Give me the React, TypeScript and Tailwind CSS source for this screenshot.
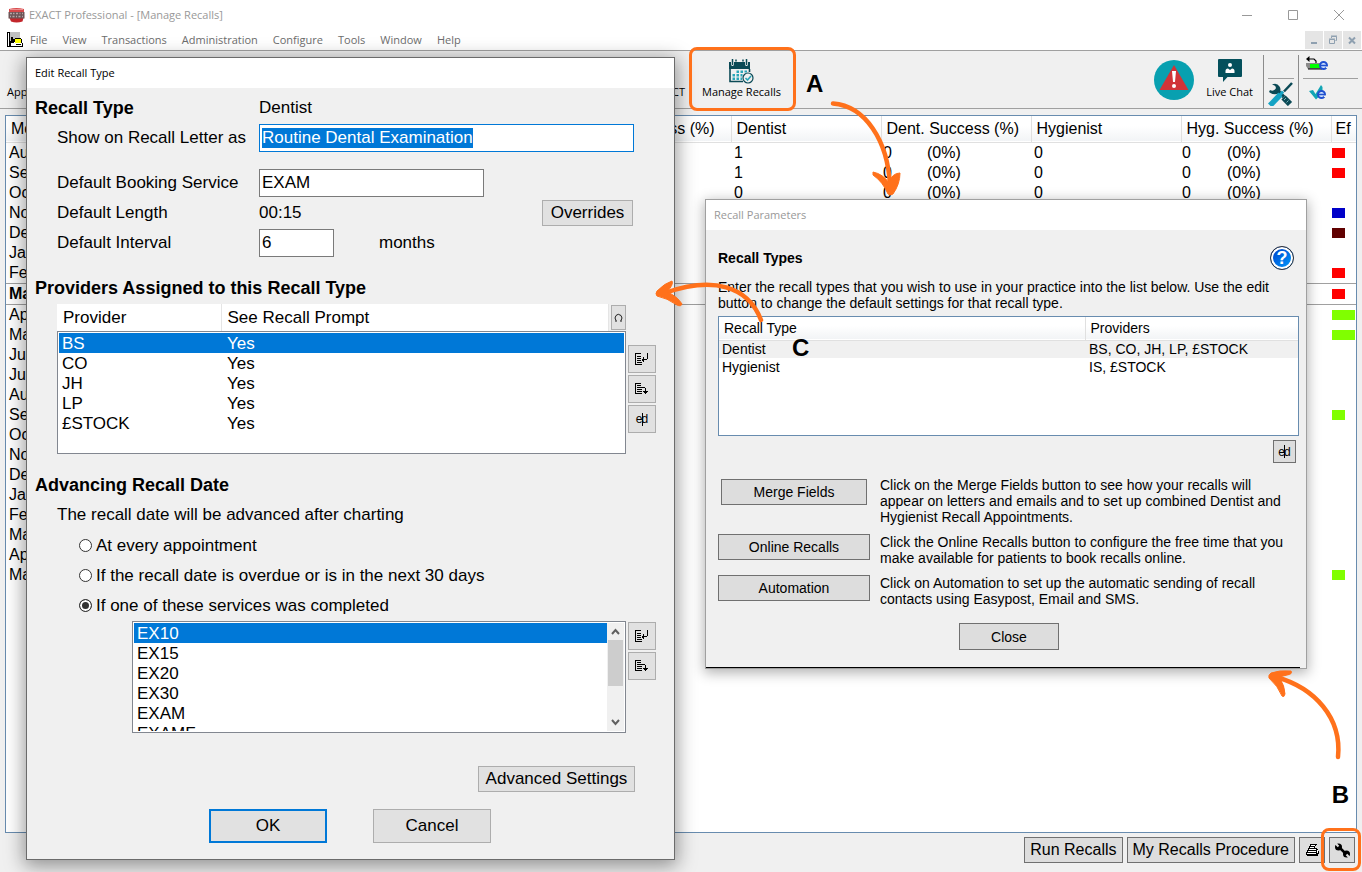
import { ReactNode, useEffect, useRef, useState } from "react";

interface IMonthRow {
  month: string;
  dentist?: number;
  hygienist?: number;
  current?: boolean;
  marker?: string;
}

const menuItems = ["File", "View", "Transactions", "Administration", "Configure", "Tools", "Window", "Help"];

const RED = "w-[13px] bg-[#ff0000]";
const GREEN = "w-[13px] bg-[#80ff00]";
const WIDE_GREEN = "w-[23px] bg-[#80ff00]";

const months: IMonthRow[] = [
  { month: "August", dentist: 1, hygienist: 0, marker: RED },
  { month: "September", dentist: 1, hygienist: 0, marker: RED },
  { month: "October", dentist: 0, hygienist: 0 },
  { month: "November", marker: "w-[13px] bg-[#0000c8]" },
  { month: "December", marker: "w-[13px] bg-[#600000]" },
  { month: "January" },
  { month: "February", marker: RED },
  { month: "March", current: true, marker: RED },
  { month: "April", marker: WIDE_GREEN },
  { month: "May", marker: WIDE_GREEN },
  { month: "June" },
  { month: "July" },
  { month: "August" },
  { month: "September", marker: GREEN },
  { month: "October" },
  { month: "November" },
  { month: "December" },
  { month: "January" },
  { month: "February" },
  { month: "March" },
  { month: "April" },
  { month: "May", marker: GREEN },
];

const providers = ["BS", "CO", "JH", "LP", "£STOCK"];

const services = ["EX10", "EX15", "EX20", "EX30", "EXAM", "EXAMF"];

const advanceOptions = [
  "At every appointment",
  "If the recall date is overdue or is in the next 30 days",
  "If one of these services was completed",
];

const recallTypes = [
  { name: "Dentist", providers: "BS, CO, JH, LP, £STOCK" },
  { name: "Hygienist", providers: "IS, £STOCK" },
];

/* ---------- icons ---------- */

const AppIcon = () => (
  <svg width="17" height="15" viewBox="0 0 17 15">
    <path d="M1 1 Q8.500 -1 16 1 L16 5 L1 5Z" fill="#d8484a" />
    <path d="M1.500 10 L15.500 10 L14.500 13.500 Q8.500 15.500 3 13.500Z" fill="#c2262b" />
    <rect x="0.500" y="4" width="16" height="6.500" fill="#6d5557" />
    <path d="M2 5.500h2M5 5.500h1.500M8 5.500h2M11.500 5.500h1M14 5.500h1M2 8.500h1M4.500 8.500h2M8 8.500h1M10.500 8.500h2M14 8.500h1" stroke="#b5a5a5" strokeWidth="1.500" />
    <path d="M2 1.500h13" stroke="#f0a0a0" strokeWidth="0.800" />
  </svg>
);

const DocIcon = () => (
  <svg width="16" height="16" viewBox="0 0 16 16" shapeRendering="crispEdges">
    <path d="M0 0h3v14h4v1H0z" fill="#000" />
    <rect x="1" y="1" width="1" height="13" fill="#fff" />
    <rect x="3" y="0" width="10" height="9" fill="#c0c0c0" />
    <path d="M4 5h2v2h2v1h1v2H7v1H4zM3 9h1v5H3z" fill="#000" />
    <rect x="4" y="11" width="3" height="3" fill="#fff" />
    <rect x="8" y="7" width="6" height="4" fill="#ffff00" />
    <path d="M8 6h6v1H8zM14 7h1v4h-1zM7 11h9v4H7z" fill="#000" />
    <path d="M7 11h8v3H7z" fill="#fff" />
    <path d="M9 12h5v1H9z" fill="#000" />
  </svg>
);

const CalendarIcon = () => (
  <svg width="25" height="25" viewBox="0 0 25 25">
    <path d="M0 3h2v3q1.500 2 3 0V3h11v3q1.500 2 3 0V3h2v7H0z" fill="#0b4a56" />
    <path d="M3.500 0v6M17.500 0v6M7 0.500v2M14 0.500v2" stroke="#0b4a56" strokeWidth="1.500" />
    <path d="M1 10v12.500h13M20.500 10v3" fill="none" stroke="#0b4a56" strokeWidth="1.600" />
    <path d="M7.500 11.500h2.500v2.500H7.500zM11.500 11.500h2.500v2.500h-2.500zM15.500 11.500h2.500v2h-2.500zM3.500 15h2.500v2.500H3.500zM7.500 15h2.500v2.500H7.500zM11.500 15h2v2.500h-2zM3.500 18.500h2.500v2.500H3.500zM7.500 18.500h2.500v2.500H7.500zM11.500 18.500h1.500v2.500h-1.500z" fill="#2aa6b8" />
    <circle cx="19" cy="19" r="5" fill="#f0f0f0" stroke="#0b4a56" strokeWidth="1.200" />
    <path d="M16.500 19l2 2 3.500-4" fill="none" stroke="#2aa6b8" strokeWidth="1.600" />
  </svg>
);

const AlertIcon = () => (
  <svg width="40" height="40" viewBox="0 0 40 40">
    <circle cx="20" cy="20" r="20" fill="#08a0b0" />
    <path d="M20 5L34.500 30H5.500z" fill="#d13438" />
    <path d="M18 11h4l-1 11h-2z" fill="#fff" />
    <circle cx="20" cy="26" r="2" fill="#fff" />
  </svg>
);

const ChatIcon = () => (
  <svg width="24" height="23" viewBox="0 0 24 23">
    <path d="M1 0h22q1 0 1 1v16q0 1-1 1H9.500L5 23V18H1q-1 0-1-1V1q0-1 1-1z" fill="#04505c" />
    <circle cx="12" cy="6" r="2" fill="#fff" />
    <path d="M7.500 14v-2q0-2.500 2.500-2.500L12 11l2-1.500q2.500 0 2.500 2.500v2z" fill="#fff" />
  </svg>
);

const ToolsIcon = () => (
  <svg width="26" height="24" viewBox="0 0 26 24">
    <path d="M24 1l-8 8.500" stroke="#0b4a56" strokeWidth="2.500" />
    <path d="M15.500 15.500l6.500 6.500" stroke="#0b4a56" strokeWidth="6" />
    <path d="M16 18l2-2M18.500 20.500l2-2" stroke="#7fb5bd" strokeWidth="1" />
    <path d="M10 9l6 6" stroke="#0b4a56" strokeWidth="3.500" />
    <path d="M4 2.500q5-2 7.500 2t-1 7q-5 2-9.500-1.500l1-2q3 1.500 5-.500t-.500-4z" fill="#0b4a56" />
    <path d="M2 23.500L12.500 12.500" stroke="#14a3c4" strokeWidth="5.500" />
    <path d="M12 13l3-3.500" stroke="#14a3c4" strokeWidth="3" />
  </svg>
);

const CardReaderIcon = () => (
  <svg width="23" height="15" viewBox="0 0 23 15">
    <path d="M0 7h17v6H2L0 10z" fill="#8a8a8a" />
    <path d="M4 8h13v4H4z" fill="#0f0" />
    <path d="M2 13h14M10 7V5L8 3H2" fill="none" stroke="#000" strokeWidth="1.200" />
    <path d="M0 3L3.500 0v6z" fill="#000" />
    <circle cx="17.500" cy="9.500" r="3.500" fill="#d8e8ff" stroke="#2050d0" strokeWidth="2" />
    <path d="M15 9.500h6" stroke="#2050d0" strokeWidth="1.600" />
    <path d="M20 10.500h3v1.500h-3z" fill="#f0f0f0" />
  </svg>
);

const CheckEIcon = () => (
  <svg width="19" height="15" viewBox="0 0 19 15">
    <path d="M0 6l4-1 2.500 4L12 0l1.500 2v6L7 14.500z" fill="#12a5b5" />
    <circle cx="12.500" cy="9.500" r="3.500" fill="#d8e8ff" stroke="#2050d0" strokeWidth="2" />
    <path d="M10 9.500h6" stroke="#2050d0" strokeWidth="1.600" />
    <path d="M15 10.500h4v1.500h-4z" fill="#f0f0f0" />
  </svg>
);

const ListEnterIcon = () => (
  <svg width="14" height="12" viewBox="0 0 14 12" shapeRendering="crispEdges" aria-hidden="true">
    <path d="M0 0h6v1H1v10h6v1H0zM2 3h4v1H2zM2 5h4v1H2zM2 7h4v1H2zM2 9h5v1H2z" />
    <path d="M12 0h1v6h-1v1H9v2H8V8H7V6h1V4h1v2h3z" />
  </svg>
);

const ListAppendIcon = () => (
  <svg width="14" height="12" viewBox="0 0 14 12" shapeRendering="crispEdges" aria-hidden="true">
    <path d="M0 0h6v1H1v9h6v1H0zM2 2h4v1H2zM2 4h5v1H2zM2 6h5v1H2zM2 8h5v1H2z" />
    <path d="M7 4h3v1h1v3h2v1h-1v1h-1v1h-1v-1H9V9H8V8h2V5H7z" />
  </svg>
);

const PrinterIcon = () => (
  <svg width="13" height="12" viewBox="0 0 13 12" shapeRendering="crispEdges" aria-hidden="true">
    <path d="M4 0h7v1h-1v1H9v2h2v1h1v2h1v3h-1v2H1v-1H0V8h1V6h1V4h1V2h1z" />
    <path d="M5 1h4v1H5zM4 3h4v1H4zM3 5h7v1H3zM2 7h8v1H2zM1 9h9v1H1zM11 6h1v3h-1z" fill="#fff" />
  </svg>
);

const SpannerIcon = () => (
  <svg width="15" height="15" viewBox="0 0 15 15" aria-hidden="true">
    <path d="M4 4l7 7" stroke="#000" strokeWidth="2.500" />
    <circle cx="3.500" cy="4" r="3.500" />
    <circle cx="11.500" cy="11" r="3.500" />
    <path d="M0 0l3.500 3.500M15 15l-3.500-3.500" stroke="#ddd" strokeWidth="2.200" />
  </svg>
);

/* "e|d" glyph: two letters with a text cursor between them */
const EditGlyph = () => (
  <span className="flex items-center text-xs leading-3">
    e<span className="-mx-px h-[13px] w-px bg-black" />d
  </span>
);

/* ---------- shared bits ---------- */

const IconButton = ({ label, children }: { label: string; children: ReactNode }) => (
  <button type="button" aria-label={label} className="flex size-7 items-center justify-center border border-[#adadad] bg-[#e1e1e1]">
    {children}
  </button>
);

const DarkButton = ({ className, label, children }: { className: string; label?: string; children: ReactNode }) => (
  <button type="button" aria-label={label} className={`border border-[#707070] bg-[#ddd] ${className}`}>
    {children}
  </button>
);

/* ---------- main window ---------- */

const TitleBar = () => (
  <header className="bg-white font-['Open_Sans','Noto_Sans',sans-serif] text-[11px]">
    <div className="flex h-[30px] items-center pl-2 text-[#999]">
      <AppIcon />
      <h1 className="ml-1">EXACT Professional - [Manage Recalls]</h1>
      <div className="ml-auto flex gap-[34px] pr-[17px]">
        <button type="button" aria-label="Minimise">
          <svg width="12" height="12" viewBox="0 0 12 12"><path d="M1 6.500h10" stroke="#999" /></svg>
        </button>
        <button type="button" aria-label="Maximise">
          <svg width="12" height="12" viewBox="0 0 12 12"><path d="M1.500 1.500h9v9h-9z" fill="none" stroke="#999" /></svg>
        </button>
        <button type="button" aria-label="Close window">
          <svg width="12" height="12" viewBox="0 0 12 12"><path d="M1 1l10 10M11 1L1 11" stroke="#999" /></svg>
        </button>
      </div>
    </div>
    <div className="flex h-5 items-center pl-[7px] text-[#6d6d6d]">
      <DocIcon />
      <nav className="ml-[7px] flex gap-[15px]">
        {menuItems.map((item) => (
          <button key={item} type="button">{item}</button>
        ))}
      </nav>
      <div className="ml-auto flex gap-px pr-px">
        <button type="button" aria-label="Minimise document" className="bg-[#e5e5e5]">
          <svg width="18" height="18" viewBox="0 0 18 18"><path d="M6 12h6" stroke="#8fa0b0" strokeWidth="2" /></svg>
        </button>
        <button type="button" aria-label="Restore document" className="bg-[#e5e5e5]">
          <svg width="18" height="18" viewBox="0 0 18 18"><path d="M5.500 8.500h5v4h-5zM5 8h6M7.500 7V5.500h5v4h-1M7 5h6" fill="none" stroke="#8fa0b0" /></svg>
        </button>
        <button type="button" aria-label="Close document" className="bg-[#e5e5e5]">
          <svg width="18" height="18" viewBox="0 0 18 18"><path d="M6 6.500l6 6M12 6.500l-6 6" stroke="#8fa0b0" strokeWidth="2" /></svg>
        </button>
      </div>
    </div>
  </header>
);

const Toolbar = () => (
  <div className="flex h-[59px] border-y border-[#a0a0a0] font-['Open_Sans','Noto_Sans',sans-serif] text-[11px] leading-4">
    <div className="flex w-[685px] items-end justify-between pb-2 pl-[7px]">
      <button type="button">Appointments</button>
      <button type="button">EXACT</button>
    </div>
    <button type="button" className="ml-[17px] flex flex-col items-center justify-end pb-2">
      <CalendarIcon />
      Manage Recalls
    </button>
    <div className="ml-auto flex pr-1">
      <button type="button" aria-label="Alerts" className="mr-3"><AlertIcon /></button>
      <button type="button" className="mr-[10px] flex flex-col items-center justify-end pb-2">
        <ChatIcon />
        <span className="mt-[2px]">Live Chat</span>
      </button>
      <div className="mt-1 flex flex-col border-x border-[#8c8c8c] px-1">
        <div className="h-6 shrink-0 border-b border-[#a0a0a0]" />
        <button type="button" aria-label="Tools" className="pt-[3px]"><ToolsIcon /></button>
      </div>
      <div className="ml-1 w-[55px]">
        <div className="h-7 border-b border-[#a0a0a0] pt-[5px] pl-[3px]">
          <button type="button" aria-label="Card reader" className="block"><CardReaderIcon /></button>
        </div>
        <button type="button" aria-label="Check eligibility" className="mt-[6px] ml-[6px] block"><CheckEIcon /></button>
      </div>
    </div>
  </div>
);

const headCell = "border-l border-[#e0e0e0] pl-[5px] font-normal whitespace-nowrap overflow-hidden";

const RecallsTable = () => (
  <main className="mx-[5px] mt-[6px] flex-1 border border-[#688caf] bg-white">
    <table className="w-full table-fixed text-base leading-5">
      <colgroup>
        <col />
        <col className="w-[150px]" />
        <col className="w-[150px]" />
        <col className="w-[150px]" />
        <col className="w-[150px]" />
        <col className="w-[150px]" />
        <col className="w-[150px]" />
        <col className="w-[150px]" />
        <col className="w-[25px]" />
      </colgroup>
      <thead>
        <tr className="h-[26px] border-b border-[#e0e0e0] bg-linear-to-b from-white from-40% to-[#f2f4f6] text-left">
          <th className="pl-[5px] font-normal">Month</th>
          <th className={headCell}>Recalls</th>
          <th className={headCell}>Booked</th>
          <th className={headCell}>Total Success (%)</th>
          <th className={headCell}>Dentist</th>
          <th className={headCell}>Dent. Success (%)</th>
          <th className={headCell}>Hygienist</th>
          <th className={headCell}>Hyg. Success (%)</th>
          <th className="overflow-hidden border-l border-[#e0e0e0] pl-1 font-normal">Ef</th>
        </tr>
      </thead>
      <tbody>
        {months.map((row, index) => (
          <tr key={index} className={row.current ? "h-[21px] border-y border-[#a0a0a0] font-bold" : "h-5"}>
            <td className="pl-[3px]">{row.month}</td>
            <td />
            <td />
            <td />
            <td className="pl-[3px]">{row.dentist}</td>
            <td className="pl-[2px]">
              {row.dentist !== undefined && <><span className="inline-block w-11">0</span>(0%)</>}
            </td>
            <td className="pl-[3px]">{row.hygienist}</td>
            <td className="pl-px">
              {row.hygienist !== undefined && <><span className="inline-block w-[45px]">0</span>(0%)</>}
            </td>
            <td className="pl-px">{row.marker && <div className={`h-[10px] ${row.marker}`} />}</td>
          </tr>
        ))}
      </tbody>
    </table>
  </main>
);

const Footer = () => (
  <footer className="flex h-[39px] items-start justify-end gap-1 pt-1 pr-[7px]">
    <DarkButton className="h-[26px] px-[5px]">Run Recalls</DarkButton>
    <DarkButton className="h-[26px] px-[5px]">My Recalls Procedure</DarkButton>
    <DarkButton label="Print" className="flex size-[26px] items-center justify-center"><PrinterIcon /></DarkButton>
    <DarkButton label="Recall parameters" className="flex size-[26px] items-center justify-center"><SpannerIcon /></DarkButton>
  </footer>
);

/* ---------- dialogs ---------- */

const listCell = "pt-[2px] pl-[3px] leading-[18px]";

const EditRecallType = () => {
  const [letterName, setLetterName] = useState("Routine Dental Examination");
  const [service, setService] = useState("EXAM");
  const [interval, setInterval] = useState("6");
  const [advance, setAdvance] = useState(2);
  const letterInput = useRef<HTMLInputElement>(null);

  useEffect(() => {
    letterInput.current?.focus();
    letterInput.current?.select();
  }, []);

  return (
    <section role="dialog" aria-label="Edit Recall Type" className="absolute top-[57px] left-[26px] w-[649px] border border-[#6b6b6b] bg-[#f0f0f0] text-[17px] leading-5 shadow-[0_4px_18px_2px_rgba(0,0,0,0.4)]">
      <h2 className="flex h-[30px] items-center bg-white pl-2 font-['Open_Sans','Noto_Sans',sans-serif] text-[11px]">Edit Recall Type</h2>

      <div className="pt-[6px] pr-[18px] pb-4 pl-2">
        <div className="flex h-7 items-center">
          <h3 className="w-56 text-lg leading-5 font-bold">Recall Type</h3>
          <span>Dentist</span>
        </div>

        <div className="mt-[2px] flex h-7 items-center pr-[22px]">
          <label htmlFor="letter-name" className="w-56 pl-[22px]">Show on Recall Letter as</label>
          <input ref={letterInput} id="letter-name" value={letterName} onChange={(e) => setLetterName(e.target.value)} className="h-7 min-w-0 flex-1 border border-[#0078d7] bg-white px-[2px] outline-none selection:bg-[#0078d7] selection:text-white" />
        </div>

        <div className="mt-[17px] flex h-7 items-center">
          <label htmlFor="booking-service" className="w-56 pl-[22px]">Default Booking Service</label>
          <input id="booking-service" value={service} onChange={(e) => setService(e.target.value)} className="h-7 w-[225px] border border-[#7a7a7a] bg-white px-[2px]" />
        </div>

        <div className="flex h-8 items-center pr-[23px]">
          <span className="w-56 pl-[22px]">Default Length</span>
          <span>00:15</span>
          <button type="button" className="ml-auto h-[26px] w-[91px] border border-[#adadad] bg-[#e1e1e1]">Overrides</button>
        </div>

        <div className="flex h-7 items-center">
          <label htmlFor="interval" className="w-56 pl-[22px]">Default Interval</label>
          <input id="interval" value={interval} onChange={(e) => setInterval(e.target.value)} className="h-7 w-[75px] border border-[#7a7a7a] bg-white px-[2px]" />
          <span className="ml-[45px]">months</span>
        </div>

        <h3 className="mt-[17px] flex h-7 items-center text-lg leading-5 font-bold">Providers Assigned to this Recall Type</h3>

        <div className="mt-[2px] flex gap-[2px] pl-[22px]">
          <div className="flex-1">
            <div className="flex h-[27px] items-center">
              <table className="h-[27px] flex-1 bg-white">
                <thead>
                  <tr className="text-left">
                    <th className="w-[164px] pl-[6px] font-normal">Provider</th>
                    <th className="border-x border-[#e5e5e5] pl-[6px] font-normal">See Recall Prompt</th>
                  </tr>
                </thead>
              </table>
              <button type="button" aria-label="Undo" className="ml-[2px] flex h-[25px] w-[15px] items-center justify-center border border-[#adadad] bg-[#e1e1e1]">
                <svg width="9" height="9" viewBox="0 0 9 9"><path d="M2 7.500Q0 5 2 2.500T7 2.500Q9 5 7 7.500M1 8h2M6 8h2" fill="none" stroke="#222" /></svg>
              </button>
            </div>
            <div className="h-[123px] border border-[#828790] bg-white p-px">
              <table className="w-full">
                <tbody>
                  {providers.map((provider, index) => (
                    <tr key={provider} className={index === 0 ? "h-5 bg-[#0078d7] text-white" : "h-5"}>
                      <td className={`w-[165px] ${listCell}`}>{provider}</td>
                      <td className={listCell}>Yes</td>
                    </tr>
                  ))}
                </tbody>
              </table>
            </div>
          </div>
          <div className="mt-[41px] flex flex-col gap-[2px]">
            <IconButton label="Insert provider"><ListEnterIcon /></IconButton>
            <IconButton label="Append provider"><ListAppendIcon /></IconButton>
            <IconButton label="Edit provider"><EditGlyph /></IconButton>
          </div>
        </div>

        <h3 className="mt-[17px] flex h-7 items-center text-lg leading-5 font-bold">Advancing Recall Date</h3>

        <fieldset className="pl-[22px]">
          <legend className="flex h-8 items-center">The recall date will be advanced after charting</legend>
          {advanceOptions.map((option, index) => (
            <label key={option} className="flex h-[30px] items-center pl-[22px]">
              <input
                type="radio"
                name="advance"
                checked={advance === index}
                onChange={() => setAdvance(index)}
                className="mb-[2px] size-[13px] appearance-none rounded-full border border-[#333] bg-white checked:bg-[#333] checked:shadow-[inset_0_0_0_2px_white]"
              />
              <span className="ml-1">{option}</span>
            </label>
          ))}
        </fieldset>

        <div className="flex gap-[2px] pl-[97px]">
          <div className="flex h-28 flex-1 border border-[#828790] bg-white p-px">
            <ul role="listbox" aria-label="Services" className="flex-1 overflow-hidden">
              {services.map((name, index) => (
                <li key={name} role="option" aria-selected={index === 0} className={index === 0 ? `h-5 bg-[#0078d7] text-white ${listCell}` : `h-5 ${listCell}`}>
                  {name}
                </li>
              ))}
            </ul>
            <div className="flex w-[17px] flex-col items-center bg-[#f0f0f0]">
              <svg width="15" height="17" viewBox="0 0 15 17"><path d="M4 11l3.500-4 3.500 4" fill="none" stroke="#606060" strokeWidth="2" /></svg>
              <div className="h-[46px] w-[15px] bg-[#cdcdcd]" />
              <svg className="mt-auto" width="15" height="17" viewBox="0 0 15 17"><path d="M4 6l3.500 4L11 6" fill="none" stroke="#606060" strokeWidth="2" /></svg>
            </div>
          </div>
          <div className="mt-px flex flex-col gap-[2px]">
            <IconButton label="Insert service"><ListEnterIcon /></IconButton>
            <IconButton label="Append service"><ListAppendIcon /></IconButton>
          </div>
        </div>

        <div className="mt-[33px] flex justify-end pr-[21px]">
          <button type="button" className="h-[26px] w-[157px] border border-[#adadad] bg-[#e1e1e1]">Advanced Settings</button>
        </div>

        <div className="mt-[17px] flex gap-[46px] pl-[174px]">
          <button type="button" className="h-[34px] w-[118px] border-2 border-[#0078d7] bg-[#e1e1e1]">OK</button>
          <button type="button" className="h-[34px] w-[118px] border border-[#adadad] bg-[#e1e1e1]">Cancel</button>
        </div>
      </div>
    </section>
  );
};

const RecallParameters = () => (
  <section role="dialog" aria-label="Recall Parameters" className="absolute top-[199px] left-[705px] w-[602px] border border-[#a0a0a0] bg-[#f0f0f0] text-sm leading-4 shadow-[0_3px_12px_1px_rgba(0,0,0,0.3)]">
    <h2 className="flex h-[30px] items-center bg-white pl-2 font-['Open_Sans','Noto_Sans',sans-serif] text-[11px] text-[#999]">Recall Parameters</h2>

    <div className="px-3 pt-4">
      <div className="flex h-6 items-center justify-between">
        <h3 className="font-bold">Recall Types</h3>
        <button type="button" aria-label="Help" className="flex size-6 items-center justify-center rounded-full border border-[#333] bg-[#1050e8] bg-linear-to-br from-[#0a35c8] to-[#10a0ff] text-lg leading-5 font-bold text-white shadow-[inset_0_0_0_2px_white]">?</button>
      </div>

      <p className="mt-[9px]">
        Enter the recall types that you wish to use in your practice into the list below. Use the edit
        button to change the default settings for that recall type.
      </p>

      <div className="mt-[5px] -mr-[5px] h-[120px] border border-[#688caf] bg-white">
        <table className="w-full">
          <thead>
            <tr className="h-[23px] border-b border-[#e0e0e0] bg-linear-to-b from-white from-40% to-[#f2f4f6] text-left">
              <th className="pl-[5px] font-normal">Recall Type</th>
              <th className="w-[213px] border-l border-[#e0e0e0] pl-[5px] font-normal">Providers</th>
            </tr>
          </thead>
          <tbody>
            {recallTypes.map((type, index) => (
              <tr key={type.name} className={index === 0 ? "h-[18px] bg-[#f0f0f0]" : "h-[18px]"}>
                <td className="pl-[3px]">{type.name}</td>
                <td className="pl-1">{type.providers}</td>
              </tr>
            ))}
          </tbody>
        </table>
      </div>

      <div className="-mr-[2px] mt-1 flex justify-end">
        <DarkButton label="Edit recall type" className="flex size-[23px] items-center justify-center"><EditGlyph /></DarkButton>
      </div>

      <div className="mt-[14px] grid grid-cols-[152px_1fr] gap-x-[10px] gap-y-[9px]">
        <DarkButton className="mx-[3px] mt-[2px] h-[26px]">Merge Fields</DarkButton>
        <p>
          Click on the Merge Fields button to see how your recalls will
          appear on letters and emails and to set up combined Dentist and
          Hygienist Recall Appointments.
        </p>
        <DarkButton className="h-[26px]">Online Recalls</DarkButton>
        <p>
          Click the Online Recalls button to configure the free time that you
          make available for patients to book recalls online.
        </p>
        <DarkButton className="h-[26px]">Automation</DarkButton>
        <p>
          Click on Automation to set up the automatic sending of recall
          contacts using Easypost, Email and SMS.
        </p>
      </div>

      <div className="mt-4 flex justify-center pl-[6px]">
        <DarkButton className="h-[27px] w-[100px]">Close</DarkButton>
      </div>
    </div>
    <div className="mt-[17px] mr-[6px] h-px bg-black" />
  </section>
);

/* ---------- lettered callouts on top of everything ---------- */

const letter = "absolute text-2xl leading-6 font-bold";

const Callouts = () => (
  <>
    <div className="absolute top-[47px] left-[689px] h-16 w-[107px] rounded-lg border-3 border-[#ff711b]" />
    <span className={`${letter} top-[72px] left-[806px]`}>A</span>
    <svg className="absolute top-[100px] left-[830px]" width="74" height="98" viewBox="0 0 74 98" fill="none" stroke="#ff711b">
      <path d="M3 3.500C35 6 58 40 60 86" strokeWidth="4.500" strokeLinecap="round" />
      <path d="M43 72Q53 74 59 83Q62 73 70 73Q70 84 63 94Q60 96 58 94Q53 82 43 75Z" fill="#ff711b" strokeWidth="1" strokeLinejoin="round" />
    </svg>

    <svg className="absolute top-[278px] left-[653px]" width="114" height="48" viewBox="0 0 114 48" fill="none" stroke="#ff711b">
      <path d="M108 42C95 8 60 -2 12 15" strokeWidth="4.500" strokeLinecap="round" />
      <path d="M19 3Q21 6 14 14Q24 18 29 26Q28 29 24 27Q14 20 4 18Q2 16 4 13Q12 5 19 3Z" fill="#ff711b" strokeWidth="1" strokeLinejoin="round" />
    </svg>
    <span className={`${letter} top-[336px] left-[792px]`}>C</span>

    <svg className="absolute right-[17px] bottom-[110px]" width="80" height="94" viewBox="0 0 80 94" fill="none" stroke="#ff711b">
      <path d="M73 89C77 50 50 20 11 9" strokeWidth="4.500" strokeLinecap="round" />
      <path d="M26 3Q28 6 22 7L14 9Q20 18 20 26Q19 30 17 28Q13 18 4 10Q3 7 6 5Q14 2 26 3Z" fill="#ff711b" strokeWidth="1" strokeLinejoin="round" />
    </svg>
    <span className={`${letter} right-[13px] bottom-[65px]`}>B</span>
    <div className="absolute right-px bottom-px h-[43px] w-10 rounded-lg border-3 border-[#ff711b]" />
  </>
);

const App = () => {
  return (
    <div className="relative flex min-h-screen flex-col overflow-hidden bg-[#f0f0f0] font-['Liberation_Sans',Arial,sans-serif] text-base text-black">
      <TitleBar />
      <Toolbar />
      <RecallsTable />
      <Footer />
      <EditRecallType />
      <RecallParameters />
      <Callouts />
    </div>
  );
};

export default App;
